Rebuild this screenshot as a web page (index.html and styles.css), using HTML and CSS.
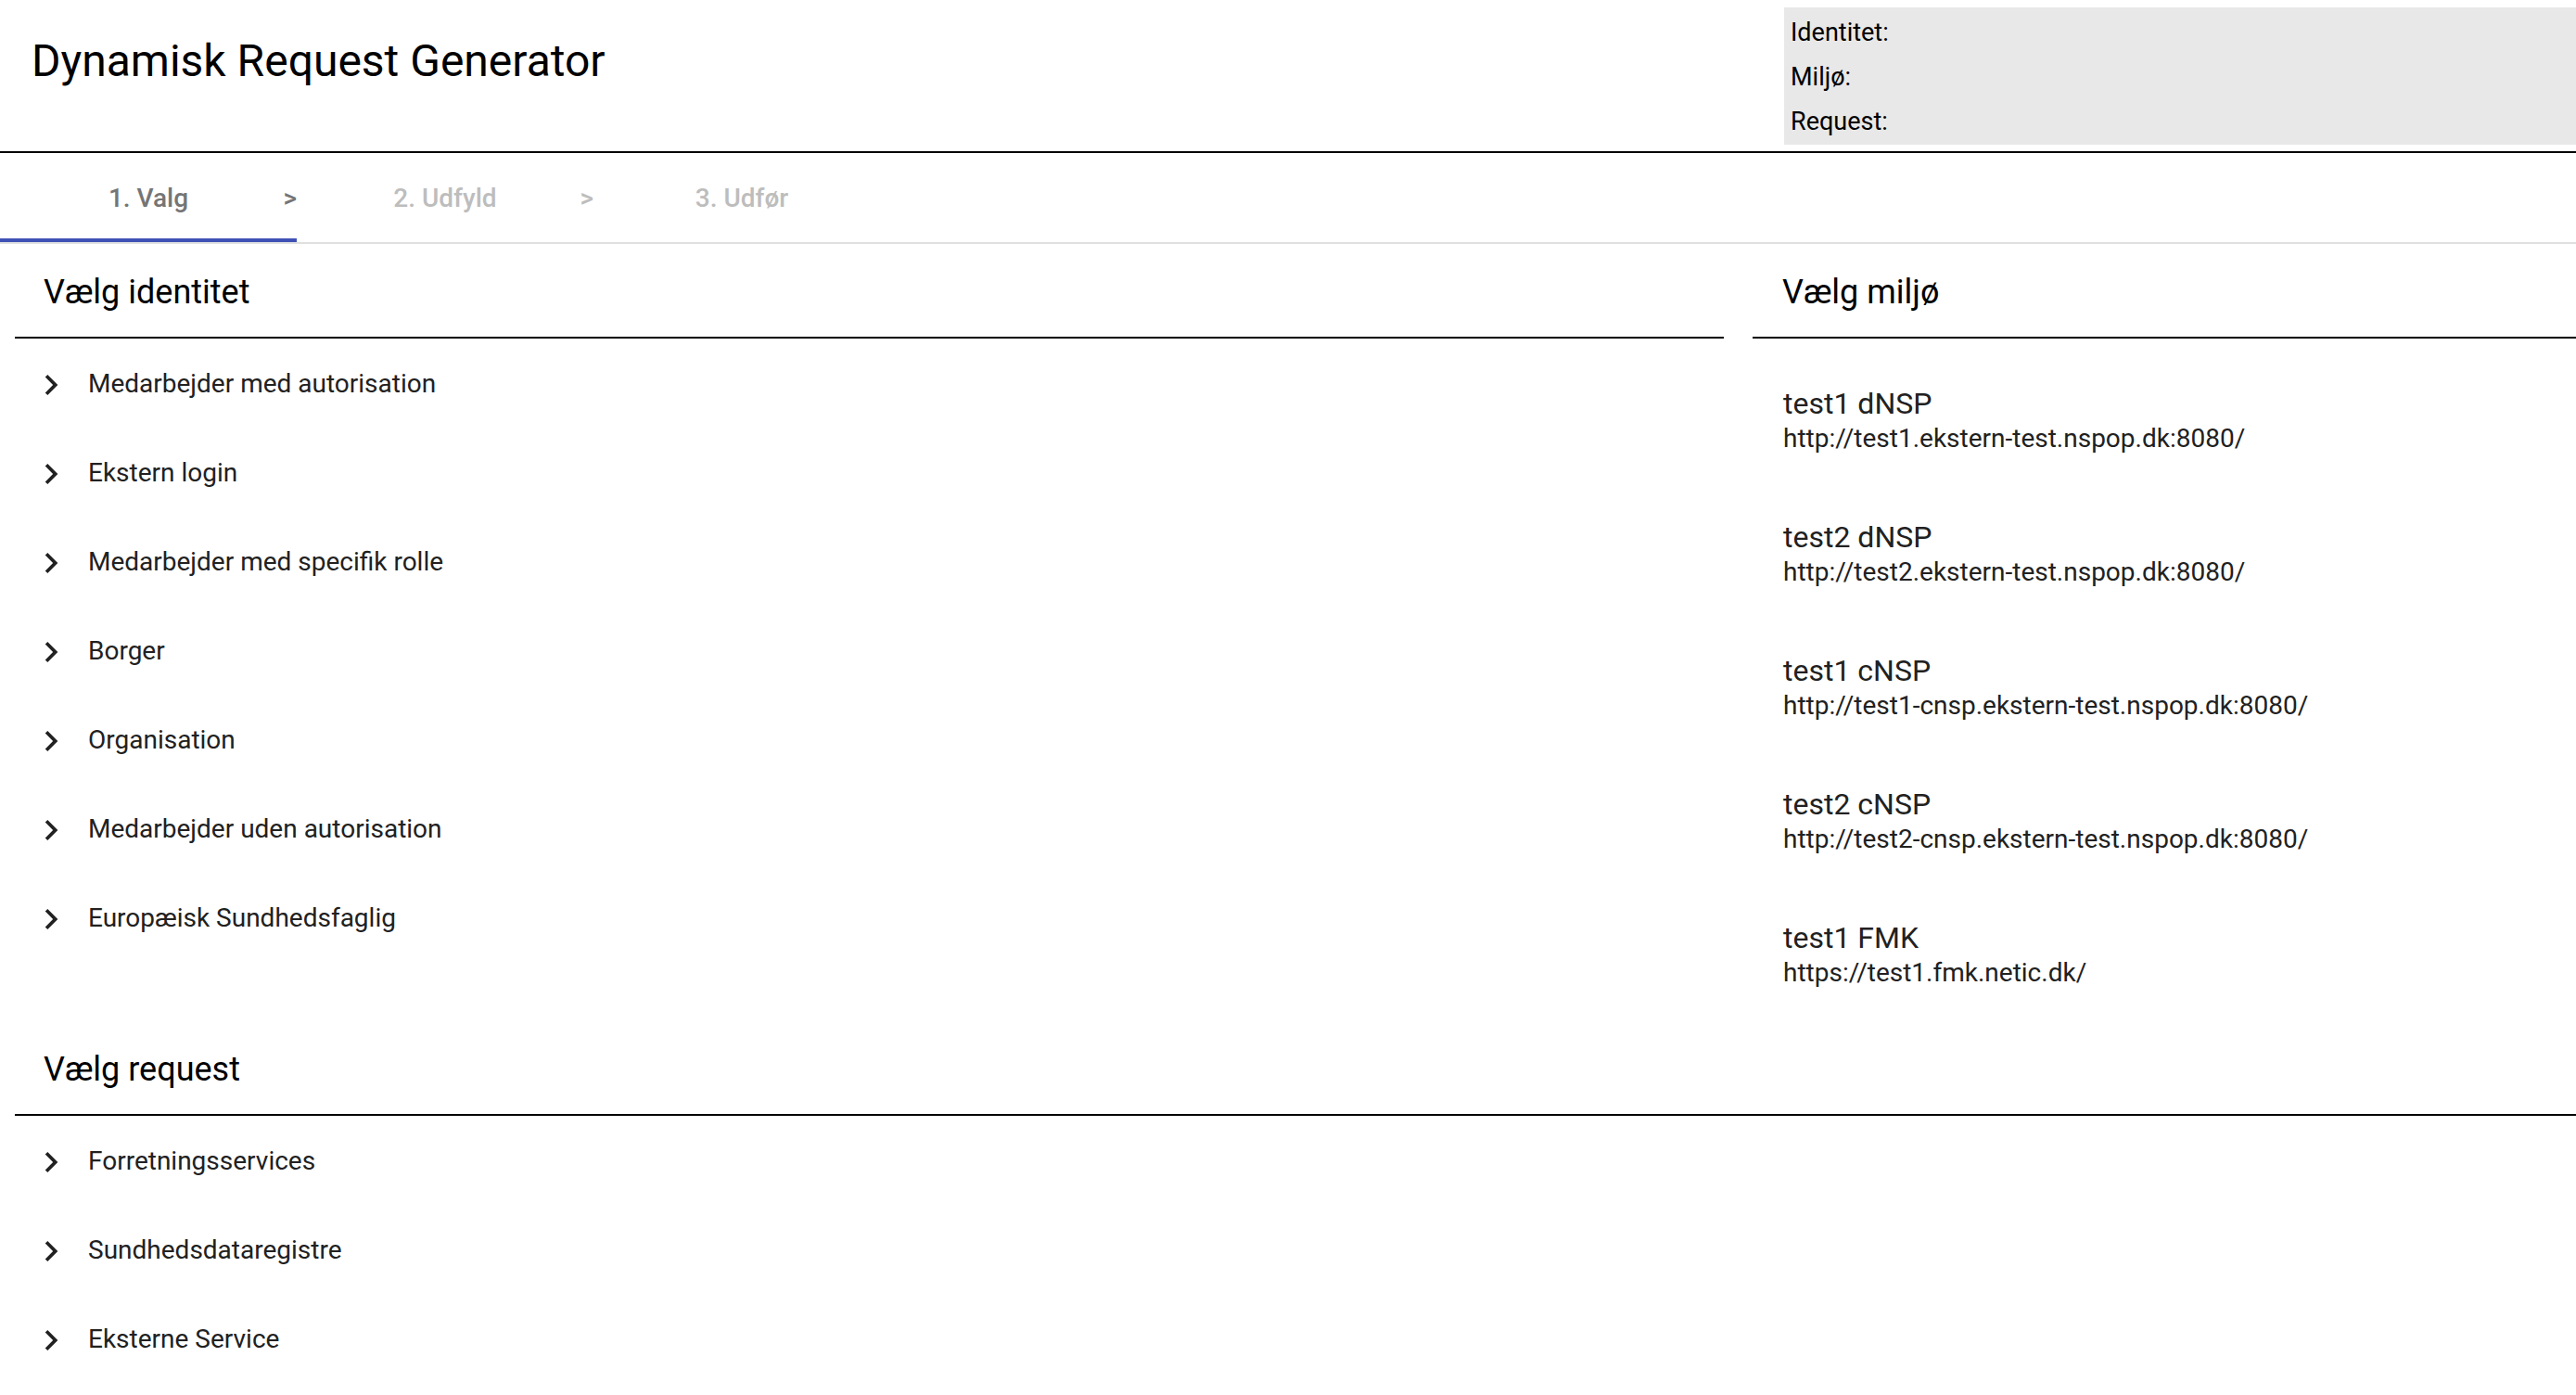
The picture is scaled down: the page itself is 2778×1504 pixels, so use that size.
FILE: index.html
```html
<!DOCTYPE html>
<html lang="da">
<head>
<meta charset="utf-8">
<title>Dynamisk Request Generator</title>
<link rel="stylesheet" href="styles.css">
</head>
<body>
<header class="topbar">
  <h1 class="app-title">Dynamisk Request Generator</h1>
  <div class="summary">
    <div class="summary-row">Identitet:</div>
    <div class="summary-row">Miljø:</div>
    <div class="summary-row">Request:</div>
  </div>
</header>
<nav class="steps">
  <div class="step active"><span class="step-label">1. Valg</span><span class="step-sep">&gt;</span></div>
  <div class="step"><span class="step-label">2. Udfyld</span><span class="step-sep">&gt;</span></div>
  <div class="step"><span class="step-label">3. Udfør</span></div>
</nav>
<main class="content">
  <section class="panel identity">
    <h2 class="panel-title">Vælg identitet</h2>
    <ul class="tree">
      <li class="tree-row"><svg class="chev" viewBox="0 0 24 24"><path d="M10 6L8.59 7.41 13.17 12l-4.58 4.59L10 18l6-6z"/></svg><span class="tree-label">Medarbejder med autorisation</span></li>
      <li class="tree-row"><svg class="chev" viewBox="0 0 24 24"><path d="M10 6L8.59 7.41 13.17 12l-4.58 4.59L10 18l6-6z"/></svg><span class="tree-label">Ekstern login</span></li>
      <li class="tree-row"><svg class="chev" viewBox="0 0 24 24"><path d="M10 6L8.59 7.41 13.17 12l-4.58 4.59L10 18l6-6z"/></svg><span class="tree-label">Medarbejder med specifik rolle</span></li>
      <li class="tree-row"><svg class="chev" viewBox="0 0 24 24"><path d="M10 6L8.59 7.41 13.17 12l-4.58 4.59L10 18l6-6z"/></svg><span class="tree-label">Borger</span></li>
      <li class="tree-row"><svg class="chev" viewBox="0 0 24 24"><path d="M10 6L8.59 7.41 13.17 12l-4.58 4.59L10 18l6-6z"/></svg><span class="tree-label">Organisation</span></li>
      <li class="tree-row"><svg class="chev" viewBox="0 0 24 24"><path d="M10 6L8.59 7.41 13.17 12l-4.58 4.59L10 18l6-6z"/></svg><span class="tree-label">Medarbejder uden autorisation</span></li>
      <li class="tree-row"><svg class="chev" viewBox="0 0 24 24"><path d="M10 6L8.59 7.41 13.17 12l-4.58 4.59L10 18l6-6z"/></svg><span class="tree-label">Europæisk Sundhedsfaglig</span></li>
    </ul>
  </section>
  <section class="panel env">
    <h2 class="panel-title">Vælg miljø</h2>
    <ul class="env-list">
      <li class="env-item"><span class="env-name">test1 dNSP</span><span class="env-url">http://test1.ekstern-test.nspop.dk:8080/</span></li>
      <li class="env-item"><span class="env-name">test2 dNSP</span><span class="env-url">http://test2.ekstern-test.nspop.dk:8080/</span></li>
      <li class="env-item"><span class="env-name">test1 cNSP</span><span class="env-url">http://test1-cnsp.ekstern-test.nspop.dk:8080/</span></li>
      <li class="env-item"><span class="env-name">test2 cNSP</span><span class="env-url">http://test2-cnsp.ekstern-test.nspop.dk:8080/</span></li>
      <li class="env-item"><span class="env-name">test1 FMK</span><span class="env-url">https://test1.fmk.netic.dk/</span></li>
    </ul>
  </section>
  <section class="panel request">
    <h2 class="panel-title">Vælg request</h2>
    <ul class="tree">
      <li class="tree-row"><svg class="chev" viewBox="0 0 24 24"><path d="M10 6L8.59 7.41 13.17 12l-4.58 4.59L10 18l6-6z"/></svg><span class="tree-label">Forretningsservices</span></li>
      <li class="tree-row"><svg class="chev" viewBox="0 0 24 24"><path d="M10 6L8.59 7.41 13.17 12l-4.58 4.59L10 18l6-6z"/></svg><span class="tree-label">Sundhedsdataregistre</span></li>
      <li class="tree-row"><svg class="chev" viewBox="0 0 24 24"><path d="M10 6L8.59 7.41 13.17 12l-4.58 4.59L10 18l6-6z"/></svg><span class="tree-label">Eksterne Service</span></li>
    </ul>
  </section>
</main>
</body>
</html>
```

FILE: styles.css
```css
* {
  box-sizing: border-box;
}

html, body {
  margin: 0;
  padding: 0;
  background: #ffffff;
  font-family: Roboto, "Noto Sans", "Liberation Sans", sans-serif;
  color: #212121;
  overflow: hidden;
}

.topbar {
  display: flex;
  justify-content: space-between;
  align-items: flex-start;
  height: 165px;
  border-bottom: 2px solid #000000;
}

.app-title {
  margin: 0;
  padding: 38px 0 0 34px;
  font-size: 48px;
  line-height: 56px;
  font-weight: 400;
  color: #000000;
}

.summary {
  width: 854px;
  height: 148px;
  margin-top: 8px;
  padding: 3px 0 0 7px;
  background: #e8e8e8;
  font-size: 27px;
  color: #000000;
}

.summary-row {
  line-height: 48px;
}

.steps {
  display: flex;
  height: 98px;
  border-bottom: 2px solid #e0e0e0;
}

.step {
  position: relative;
  width: 320px;
  display: grid;
  grid-template-columns: 1fr auto 1fr;
  align-items: center;
  font-size: 28px;
  font-weight: 500;
  color: #bdbdbd;
}

.step-label {
  grid-column: 2;
}

.step-sep {
  grid-column: 3;
  justify-self: end;
}

.step.active {
  color: #757575;
}

.step.active::after {
  content: "";
  position: absolute;
  left: 0;
  right: 0;
  bottom: 0;
  height: 4px;
  background: #3f51b5;
}

.content {
  display: grid;
  grid-template-columns: 1843px 1fr;
  column-gap: 31px;
  align-items: start;
  padding-left: 16px;
}

.panel.request {
  grid-column: 1 / -1;
}

.panel-title {
  margin: 0;
  padding: 31px 31px 27px;
  font-size: 36px;
  line-height: 42px;
  font-weight: 400;
  color: #000000;
  border-bottom: 2px solid #000000;
}

.panel.env .panel-title {
  padding-left: 32px;
}

.tree {
  list-style: none;
  margin: 0;
  padding: 0;
}

.tree-row {
  display: flex;
  align-items: center;
  height: 96px;
  padding-left: 17px;
}

.chev {
  width: 44px;
  height: 44px;
  margin-top: 4px;
  fill: #212121;
  flex: none;
}

.tree-label {
  margin-left: 18px;
  font-size: 28px;
  color: #212121;
}

.env-list {
  list-style: none;
  margin: 0;
  padding: 16px 0 0;
}

.env-item {
  display: flex;
  flex-direction: column;
  justify-content: center;
  height: 144px;
  padding-left: 33px;
}

.env-name {
  font-size: 32px;
  line-height: 38px;
  color: #212121;
}

.env-url {
  font-size: 28px;
  line-height: 37px;
  color: #212121;
}
```
